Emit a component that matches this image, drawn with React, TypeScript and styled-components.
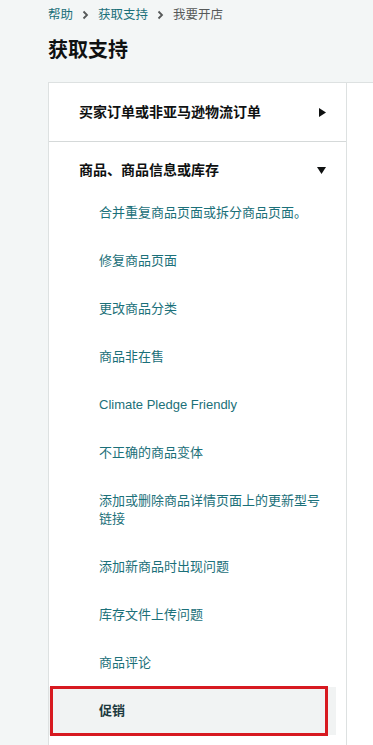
import styled, {createGlobalStyle} from "styled-components";

const GlobalStyle = createGlobalStyle`
    html, body {
        margin: 0;
        padding: 0;
        background: #f3f6f6;
        overflow-x: hidden;
    }

    body {
        font-family: "Liberation Sans", "Noto Sans CJK SC", sans-serif;
        color: #0f1111;
    }
`

const subItems = [
    '合并重复商品页面或拆分商品页面。',
    '修复商品页面',
    '更改商品分类',
    '商品非在售',
    'Climate Pledge Friendly',
    '不正确的商品变体',
    '添加或删除商品详情页面上的更新型号链接',
    '添加新商品时出现问题',
    '库存文件上传问题',
    '商品评论',
]

const Chevron = () => (
    <svg width="7" height="10" viewBox="0 0 7 10">
        <path d="M1.5 1.5 L5 5 L1.5 8.5" fill="none" stroke="#565959" strokeWidth="1.8"/>
    </svg>
)

const TriangleRight = () => (
    <svg width="7" height="9" viewBox="0 0 7 9">
        <path d="M0 0 L7 4.5 L0 9 Z" fill="#0f1111"/>
    </svg>
)

const TriangleDown = () => (
    <svg width="9" height="7" viewBox="0 0 9 7">
        <path d="M0 0 L9 0 L4.5 7 Z" fill="#0f1111"/>
    </svg>
)

export default function App() {
    return (
        <Page>
            <GlobalStyle/>
            <Breadcrumb>
                <Crumb>帮助</Crumb>
                <Chevron/>
                <Crumb>获取支持</Crumb>
                <Chevron/>
                <Crumb $current>我要开店</Crumb>
            </Breadcrumb>
            <Title>获取支持</Title>

            <Layout>
                <Nav>
                    <Header>
                        <span>买家订单或非亚马逊物流订单</span>
                        <TriangleRight/>
                    </Header>
                    <Section>
                        <Header $open>
                            <span>商品、商品信息或库存</span>
                            <TriangleDown/>
                        </Header>
                        {subItems.map(item => (
                            <SubItem key={item}>{item}</SubItem>
                        ))}
                        <SubItem $selected>促销</SubItem>
                    </Section>
                </Nav>
                <Content/>
            </Layout>
        </Page>
    );
}


const Page = styled.div`
    padding-left: 48px;
    min-height: 745px;
`

const Breadcrumb = styled.nav`
    display: flex;
    align-items: center;
    gap: 9px;
    padding-top: 6px;
    height: 18px;
    font-size: 12.5px;
    line-height: 18px;
`

const Crumb = styled.span<{ $current?: boolean }>`
    color: ${p => p.$current ? '#565959' : '#1b7079'};
`

const Title = styled.h1`
    margin: 12px 0 0;
    font-size: 20px;
    line-height: 28px;
    font-weight: 700;
    color: #0f1111;
`

const Layout = styled.div`
    display: flex;
    margin-top: 18px;
    min-height: 700px;
    width: 340px;
    border-top: 1px solid #dde1e1;
    background: #ffffff;
`

const Nav = styled.div`
    width: 297px;
    flex-shrink: 0;
    border-left: 1px solid #dde1e1;
    border-right: 1px solid #dde1e1;
`

const Content = styled.div`
    flex: 1;
    background: #ffffff;
`

const Section = styled.div`
    border-top: 1px solid #d5d9d9;
`

const Header = styled.div<{ $open?: boolean }>`
    display: flex;
    align-items: center;
    justify-content: space-between;
    padding: ${p => p.$open ? '19px 20px 10px 30px' : '20px 20px 20px 30px'};
    font-size: 14px;
    line-height: 18px;
    font-weight: 700;
    color: #0f1111;
`

const SubItem = styled.div<{ $selected?: boolean }>`
    position: relative;
    margin-right: ${p => p.$selected ? '10px' : '0'};
    padding: 15px 24px 15px 50px;
    font-size: 13px;
    line-height: 18px;
    font-weight: ${p => p.$selected ? 700 : 400};
    color: ${p => p.$selected ? '#1d3a40' : '#1b7079'};
    background: ${p => p.$selected ? '#f1f3f3' : 'transparent'};

    &::after {
        content: '';
        display: ${p => p.$selected ? 'block' : 'none'};
        position: absolute;
        left: 1px;
        right: 8px;
        top: -1px;
        bottom: -1px;
        border: 3px solid #d71920;
    }
`
